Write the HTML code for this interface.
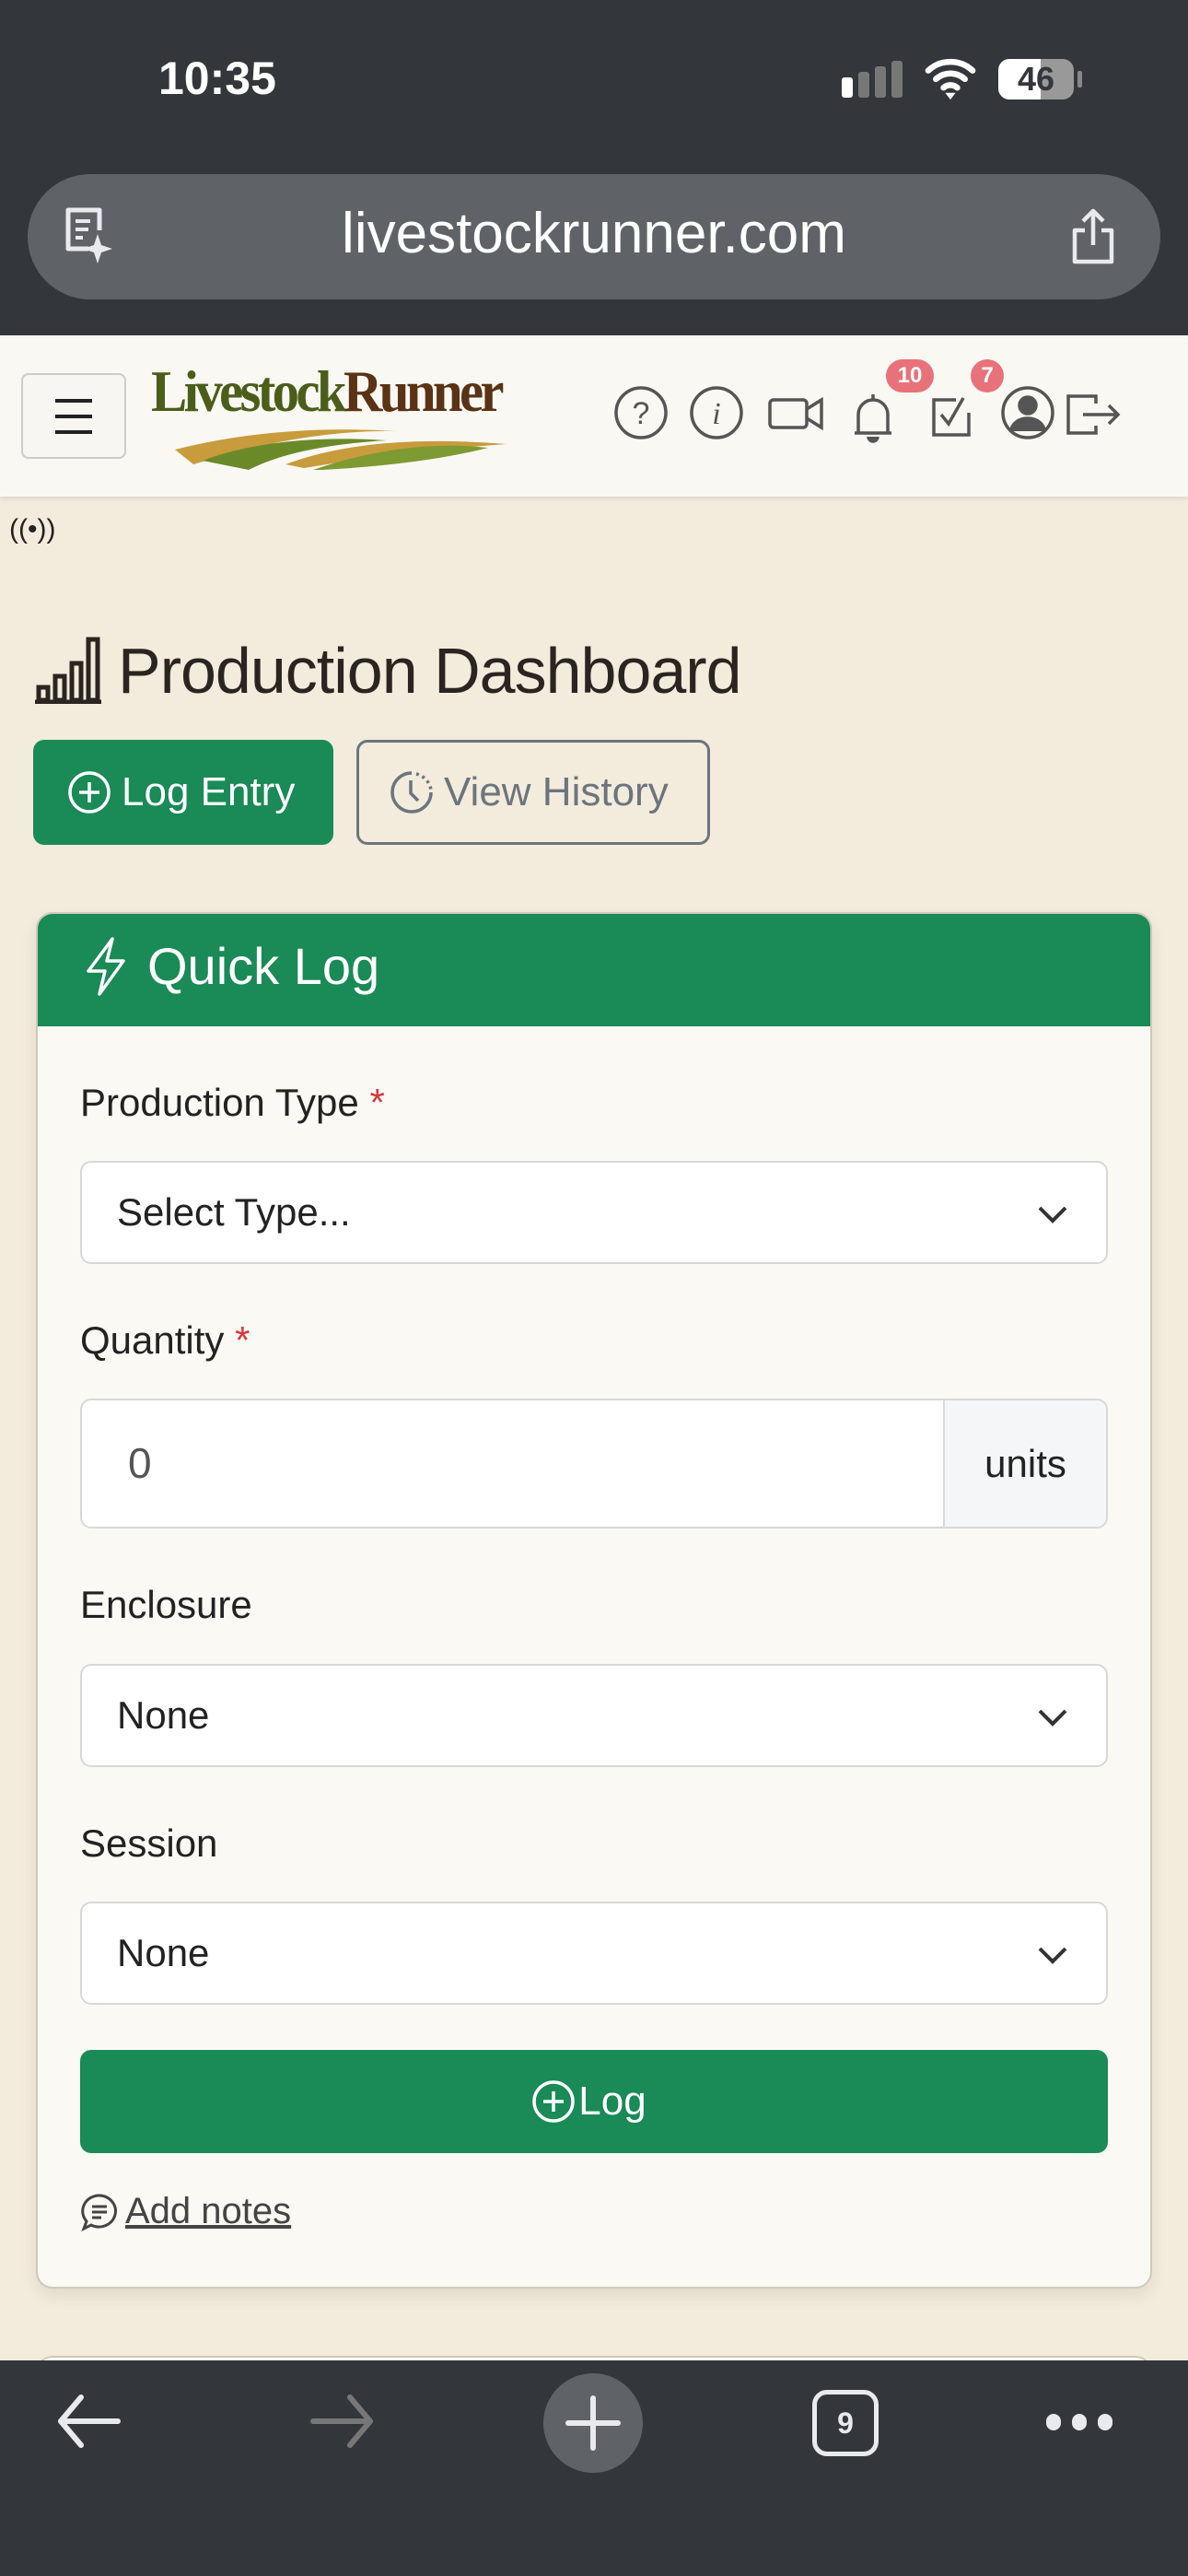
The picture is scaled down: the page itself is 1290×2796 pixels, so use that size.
<!DOCTYPE html>
<html><head><meta charset="utf-8"><style>
*{margin:0;padding:0;box-sizing:border-box}
body{width:1290px;height:2796px;position:relative;overflow:hidden;background:#f3ebdc;font-family:"Liberation Sans",sans-serif;color:#222}
.a{position:absolute}
.lbl{position:absolute;left:87px;font-size:42px;color:#222}
.req{color:#d9363e}
.sel{position:absolute;left:87px;width:1116px;height:112px;background:#fff;border:2px solid #d8d8d8;border-radius:12px;font-size:42px;padding-left:38px;line-height:108px;color:#222}
.sel svg{position:absolute;right:40px;top:38px}
</style></head><body>
<!-- status -->
<div class="a" style="left:0;top:0;width:1290px;height:364px;background:#33363a"></div>
<div class="a" style="left:172px;top:56px;font-size:50px;font-weight:bold;color:#fff">10:35</div>
<div class="a" style="left:914px;top:84px;width:12px;height:22px;background:#fff;border-radius:3px"></div>
<div class="a" style="left:932px;top:78px;width:12px;height:28px;background:#777;border-radius:3px"></div>
<div class="a" style="left:950px;top:72px;width:12px;height:34px;background:#777;border-radius:3px"></div>
<div class="a" style="left:968px;top:66px;width:12px;height:40px;background:#777;border-radius:3px"></div>
<svg class="a" style="left:1004px;top:60px" width="56" height="50" viewBox="0 0 60 54"><path d="M4 18a38 38 0 0 1 52 0M13 28a25 25 0 0 1 34 0M22 38a12 12 0 0 1 16 0" stroke="#fff" stroke-width="7" fill="none" stroke-linecap="round"/><path d="M24 44l6 8 6-8z" fill="#fff"/></svg>
<div class="a" style="left:1084px;top:64px;width:82px;height:44px;border-radius:12px;background:linear-gradient(90deg,#fff 0,#fff 56%,#999 56%);font-size:36px;font-weight:bold;color:#33363a;text-align:center;line-height:44px">46</div>
<div class="a" style="left:1170px;top:77px;width:5px;height:18px;background:#888;border-radius:2px"></div>
<div class="a" style="left:30px;top:189px;width:1230px;height:136px;border-radius:68px;background:#5f6368"></div>
<svg class="a" style="left:66px;top:222px" width="64" height="70" viewBox="0 0 64 70"><path d="M30 48H8V6h34v22" stroke="#e8eaed" stroke-width="5" fill="none" stroke-linejoin="round"/><path d="M16 18h16M16 27h14M16 36h8" stroke="#e8eaed" stroke-width="4"/><path d="M40 32l4 12 12 4-12 4-4 12-4-12-12-4 12-4z" fill="#e8eaed"/></svg>
<div class="a" style="left:0;width:1290px;top:218px;text-align:center;font-size:62px;color:#fff">livestockrunner.com</div>
<svg class="a" style="left:1162px;top:226px" width="50" height="62" viewBox="0 0 50 62"><path d="M16 24H5v34h40V24H34M25 40V4M14 14L25 3l11 11" stroke="#e8eaed" stroke-width="4.5" fill="none" stroke-linejoin="round"/></svg>
<!-- header -->
<div class="a" style="left:0;top:364px;width:1290px;height:175px;background:#faf8f3;box-shadow:0 3px 4px rgba(0,0,0,.08)"></div>
<div class="a" style="left:23px;top:405px;width:114px;height:93px;border:2px solid #ccc;border-radius:8px;background:#f7f6f2"></div>
<div class="a" style="left:60px;top:433px;width:40px;height:4px;background:#222"></div>
<div class="a" style="left:60px;top:450px;width:40px;height:4px;background:#222"></div>
<div class="a" style="left:60px;top:467px;width:40px;height:4px;background:#222"></div>
<div class="a" style="left:164px;top:388px;font-family:'Liberation Serif',serif;font-weight:bold;font-size:64px;letter-spacing:-4px;transform:scaleX(.92);transform-origin:left"><span style="color:#4a5e1a">Livestock</span><span style="color:#5a3214">Runner</span></div>
<svg class="a" style="left:180px;top:460px" width="380" height="50" viewBox="0 0 380 50"><path d="M10 28Q120 0 250 8Q150 6 30 44z" fill="#c89b3c"/><path d="M40 40Q120 10 240 18Q140 24 90 50z" fill="#6a8a2a"/><path d="M130 44Q220 10 370 22Q260 30 150 48z" fill="#c89b3c"/><path d="M160 50Q260 16 350 26Q280 44 170 50z" fill="#7e9a32"/></svg>
<svg class="a" style="left:664px;top:414px" width="570" height="70" viewBox="0 0 570 70" fill="none" stroke="#555" stroke-width="3.5">
<circle cx="32" cy="34" r="27"/><text x="32" y="46" font-size="34" fill="#555" stroke="none" text-anchor="middle" font-family="Liberation Sans">?</text>
<circle cx="114" cy="34" r="27"/><text x="114" y="46" font-size="34" fill="#555" stroke="none" text-anchor="middle" font-style="italic" font-family="Liberation Serif">i</text>
<rect x="172" y="20" width="40" height="30" rx="4"/><path d="M212 30l16-10v30l-16-10"/>
<path d="M268 56V36a16 16 0 0 1 32 0v20h4H264z"/><path d="M279 60a5 5 0 0 0 10 0" fill="#555"/><path d="M284 14v6"/>
<path d="M374 20h-24v38h38V34"/><path d="M358 36l8 10 16-28"/>
<circle cx="452" cy="34" r="27"/><circle cx="452" cy="26" r="9" fill="#555"/><path d="M434 54a18 14 0 0 1 36 0" fill="#555"/>
<path d="M526 24V16h-30v40h30v-8M512 36h38M540 26l10 10-10 10"/>
</svg>
<div class="a" style="left:962px;top:390px;width:52px;height:36px;border-radius:18px;background:#e8727a;color:#fff;font-size:24px;font-weight:bold;text-align:center;line-height:36px">10</div>
<div class="a" style="left:1054px;top:390px;width:36px;height:36px;border-radius:18px;background:#e8727a;color:#fff;font-size:24px;font-weight:bold;text-align:center;line-height:36px">7</div>
<div class="a" style="left:10px;top:558px;font-size:30px;color:#222">((•))</div>
<!-- title -->
<svg class="a" style="left:36px;top:688px" width="76" height="76" viewBox="0 0 76 76" fill="none" stroke="#2a2520" stroke-width="5"><path d="M2 74h72"/><rect x="6" y="58" width="10" height="14"/><rect x="24" y="46" width="10" height="26"/><rect x="42" y="32" width="10" height="40"/><rect x="60" y="6" width="10" height="66"/></svg>
<div class="a" style="left:128px;top:688px;font-size:70px;color:#2a2520;letter-spacing:-1px">Production Dashboard</div>
<div class="a" style="left:36px;top:803px;width:326px;height:114px;border-radius:12px;background:#1a8a57;color:#fff;font-size:44px;line-height:114px;padding-left:96px">Log Entry</div>
<svg class="a" style="left:72px;top:835px" width="50" height="50" viewBox="0 0 50 50" fill="none" stroke="#fff" stroke-width="3.5"><circle cx="25" cy="25" r="21"/><path d="M25 14v22M14 25h22"/></svg>
<div class="a" style="left:387px;top:803px;width:384px;height:114px;border-radius:12px;border:3px solid #6c757d;color:#6c757d;font-size:44px;line-height:108px;padding-left:92px">View History</div>
<svg class="a" style="left:422px;top:835px" width="50" height="50" viewBox="0 0 50 50" fill="none" stroke="#6c757d" stroke-width="3.5"><path d="M25 4a21 21 0 1 0 21 21" /><path d="M30 5a21 21 0 0 1 16 18" stroke-dasharray="3 4"/><path d="M24 12v14l8 8"/></svg>
<!-- card -->
<div class="a" style="left:39px;top:990px;width:1212px;height:1494px;background:#faf9f4;border:2px solid #d0c9b8;border-radius:18px;box-shadow:0 8px 18px rgba(0,0,0,.08);overflow:hidden">
<div style="height:122px;background:#1a8a57"></div></div>
<svg class="a" style="left:90px;top:1016px" width="50" height="66" viewBox="0 0 50 66" fill="none" stroke="#fff" stroke-width="3.5" stroke-linejoin="round"><path d="M32 3L6 38h18l-6 25 26-36H26z"/></svg>
<div class="a" style="left:160px;top:1016px;font-size:56px;color:#fff">Quick Log</div>
<div class="lbl" style="top:1173px">Production Type <span class="req">*</span></div>
<div class="sel" style="top:1260px">Select Type...<svg width="36" height="36" viewBox="0 0 36 36"><path d="M4 11l14 14 14-14" stroke="#333" stroke-width="4" fill="none"/></svg></div>
<div class="lbl" style="top:1431px">Quantity <span class="req">*</span></div>
<div class="a" style="left:87px;top:1518px;width:1116px;height:141px;background:#fff;border:2px solid #d8d8d8;border-radius:12px;overflow:hidden">
<div style="position:absolute;left:50px;top:0;line-height:137px;font-size:46px;color:#555">0</div>
<div style="position:absolute;right:0;top:0;width:177px;height:137px;background:#f5f6f8;border-left:2px solid #d8d8d8;text-align:center;line-height:137px;font-size:42px;color:#222">units</div></div>
<div class="lbl" style="top:1718px">Enclosure</div>
<div class="sel" style="top:1806px">None<svg width="36" height="36" viewBox="0 0 36 36"><path d="M4 11l14 14 14-14" stroke="#333" stroke-width="4" fill="none"/></svg></div>
<div class="lbl" style="top:1977px">Session</div>
<div class="sel" style="top:2064px">None<svg width="36" height="36" viewBox="0 0 36 36"><path d="M4 11l14 14 14-14" stroke="#333" stroke-width="4" fill="none"/></svg></div>
<div class="a" style="left:87px;top:2225px;width:1116px;height:112px;border-radius:12px;background:#1a8a57;color:#fff;font-size:44px;line-height:112px;text-align:center;padding-left:40px">Log</div>
<svg class="a" style="left:576px;top:2256px" width="50" height="50" viewBox="0 0 50 50" fill="none" stroke="#fff" stroke-width="3.5"><circle cx="25" cy="25" r="21"/><path d="M25 14v22M14 25h22"/></svg>
<svg class="a" style="left:87px;top:2380px" width="42" height="42" viewBox="0 0 42 42" fill="none" stroke="#444" stroke-width="3"><path d="M21 3a18 17 0 1 1-9 32L4 39l3-8A18 17 0 0 1 21 3z"/><path d="M13 15h16M13 21h16M13 27h10"/></svg>
<div class="a" style="left:136px;top:2378px;font-size:40px;color:#444;text-decoration:underline">Add notes</div>
<div class="a" style="left:39px;top:2557px;width:1212px;height:40px;border:2px solid #d0c9b8;border-radius:18px;background:#faf9f4"></div>
<!-- bottom bar -->
<div class="a" style="left:0;top:2562px;width:1290px;height:234px;background:#33363a"></div>
<svg class="a" style="left:58px;top:2596px" width="80" height="64" viewBox="0 0 80 64" fill="none" stroke="#e8eaed" stroke-width="6" stroke-linecap="round" stroke-linejoin="round"><path d="M70 32H8M30 6L8 32l22 26"/></svg>
<svg class="a" style="left:330px;top:2596px" width="80" height="64" viewBox="0 0 80 64" fill="none" stroke="#777" stroke-width="6" stroke-linecap="round" stroke-linejoin="round"><path d="M10 32h62M50 6l22 26-22 26"/></svg>
<div class="a" style="left:590px;top:2576px;width:108px;height:108px;border-radius:54px;background:#5f6368"></div>
<div class="a" style="left:641px;top:2600px;width:6px;height:60px;background:#e8eaed;border-radius:3px"></div>
<div class="a" style="left:614px;top:2627px;width:60px;height:6px;background:#e8eaed;border-radius:3px"></div>
<div class="a" style="left:882px;top:2594px;width:72px;height:72px;border:5px solid #e8eaed;border-radius:16px;color:#e8eaed;font-size:32px;font-weight:bold;text-align:center;line-height:62px">9</div>
<div class="a" style="left:1136px;top:2620px;width:16px;height:18px;border-radius:8px;background:#e8eaed"></div>
<div class="a" style="left:1164px;top:2620px;width:16px;height:18px;border-radius:8px;background:#e8eaed"></div>
<div class="a" style="left:1192px;top:2620px;width:16px;height:18px;border-radius:8px;background:#e8eaed"></div>
</body></html>
